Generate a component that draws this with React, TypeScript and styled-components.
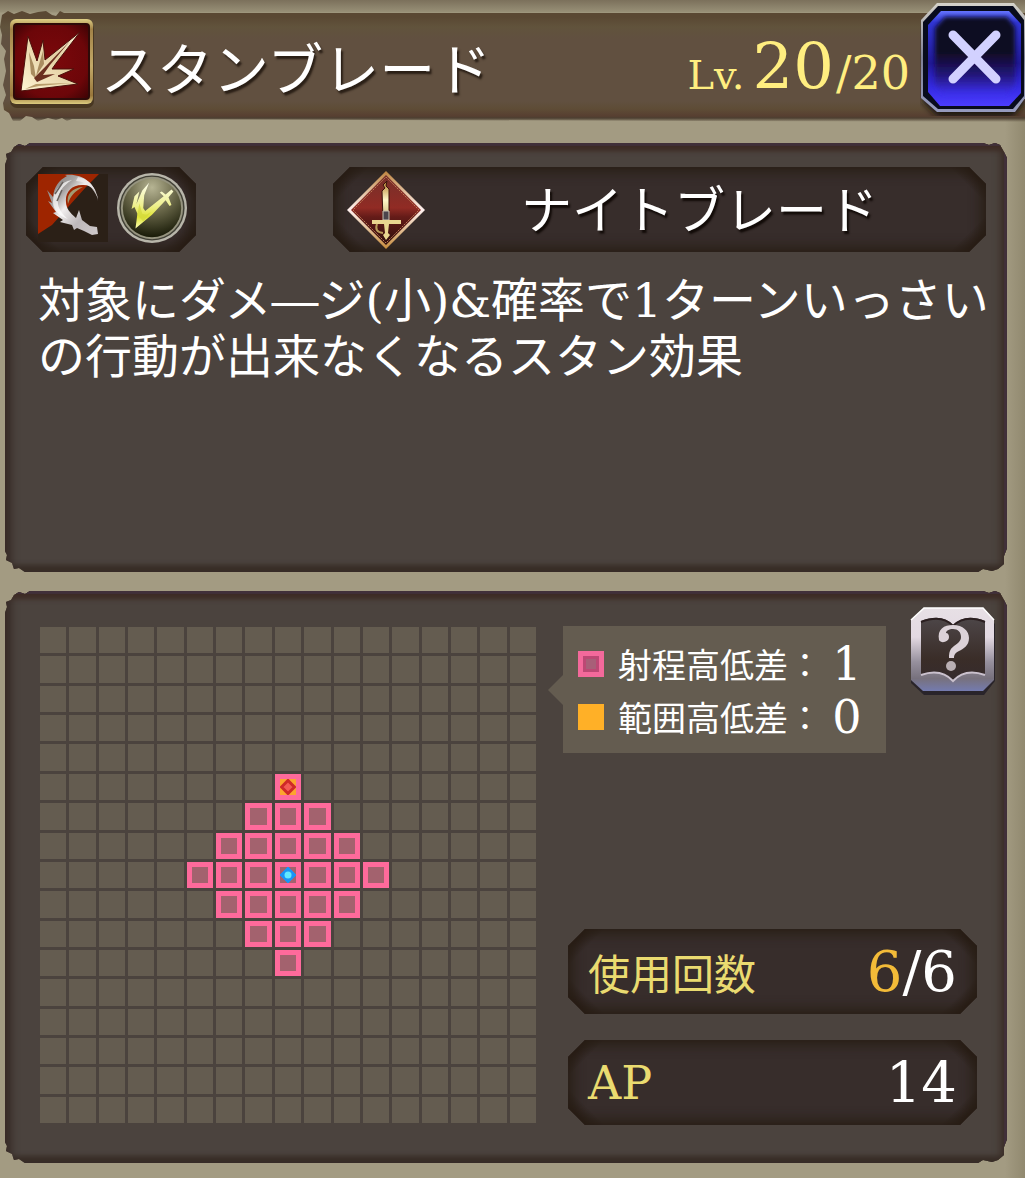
import React from "react";
import styled, { createGlobalStyle, css } from "styled-components";

const sans = `"Noto Sans CJK JP", "Noto Sans", sans-serif`;
const serif = `"DejaVu Serif", "Noto Sans CJK JP", serif`;

const GlobalStyle = createGlobalStyle`
  *, *::before, *::after { box-sizing: border-box; }
  html { min-height: 100%; background: #a39b82; }
  body {
    margin: 0;
    font-family: ${sans};
    color: #fff;
  }
  h1, h2, p, dl, dt, dd { margin: 0; font-weight: 400; }
`;

const Screen = styled.main`
  display: flex;
  flex-direction: column;
  min-height: 100vh;
  padding: 13px 0 15px;
  background:
    linear-gradient(to bottom, #7b705b 0, #989077 12px, transparent 13px),
    linear-gradient(to left, #91896f 0, #a39b82 20px);
`;

const Header = styled.header`
  position: relative;
  isolation: isolate;
  display: flex;
  align-items: center;
  height: 106px;
  padding-left: 9px;
  margin-bottom: 24px;

  &::before {
    content: "";
    position: absolute;
    z-index: -1;
    inset: -2px 0 -3px;
    background: linear-gradient(
      to bottom,
      #5a4833 0,
      #5a4833 6px,
      #61533c 16px,
      #615040 28px,
      #615040 90px,
      #5e4c36 98px,
      #573f31 105px,
      #4c3f31 107px,
      rgba(82, 72, 54, 0) 111px
    );
    clip-path: polygon(
      2px 4px, 8px 0, 14px 3px, 22px 0, 30px 3px, 38px 1px, 46px 0, 52px 4px,
      56px 5px, 60px 0, 64px 2px, 100% 2px, 100% 100%, 72px 108px, 67px 110px,
      62px 107px, 56px 109px, 48px 107px, 38px 110px, 32px 106px, 26px 105px,
      20px 110px, 13px 110px, 9px 102px, 4px 99px, 3px 92px, 6px 84px, 3px 74px,
      6px 60px, 4px 48px, 6px 40px, 1px 33px, 2px 24px, 0 16px
    );
  }
`;

const SkillIcon = styled.svg`
  flex: none;
  align-self: flex-start;
  margin-top: 5px;
  width: 86px;
  height: 90px;
`;

const Title = styled.h1`
  flex: 1;
  padding-left: 6px;
  font-size: 56px;
  line-height: 80px;
  white-space: nowrap;
  text-shadow: 2px 3px 2px #2a1f16;
`;

const Level = styled.p`
  display: flex;
  align-items: baseline;
  padding: 10px 10px 0 0;
  font-family: ${serif};
  font-size: 46px;
  line-height: 80px;
  color: #ffee80;
`;

const LevelLabel = styled.span`
  margin-right: 8px;
  font-size: 40px;
`;

const LevelNow = styled.strong`
  margin-right: 2px;
  font-size: 64px;
  font-weight: 400;
`;

const IconButton = styled.button`
  flex: none;
  padding: 0;
  border: 0;
  background: none;
  cursor: pointer;

  svg { display: block; }
`;

const CloseButton = styled(IconButton)`
  align-self: flex-start;
  margin-top: -11px;
`;

const Panel = styled.section`
  margin: 0 18px 19px 5px;
  background: #4b433e;
  box-shadow:
    inset 0 3px 1px #41303a,
    inset -3px 0 1px #41303a,
    inset 0 9px 5px -1px #3e2c25,
    inset 0 -7px 5px #382d27,
    inset 8px 0 7px -1px #3a2e2a,
    inset -8px 0 7px -1px #3e302a;
  clip-path: polygon(
    0 22px, 2px 16px, 1px 11px, 6px 9px, 9px 4px, 14px 1px, 20px 3px, 25px 0,
    calc(100% - 24px) 0, calc(100% - 18px) 2px, calc(100% - 12px) 0,
    calc(100% - 7px) 2px, calc(100% - 3px) 9px, 100% 15px,
    100% calc(100% - 24px), calc(100% - 3px) calc(100% - 16px),
    calc(100% - 3px) calc(100% - 8px), calc(100% - 9px) calc(100% - 3px),
    calc(100% - 15px) calc(100% - 1px), calc(100% - 24px) calc(100% - 3px),
    calc(100% - 29px) 100%, 20px 100%, 14px calc(100% - 4px),
    9px calc(100% - 3px), 7px calc(100% - 9px), 1px calc(100% - 12px),
    2px calc(100% - 17px), 0 calc(100% - 21px)
  );
`;

const SummaryPanel = styled(Panel)`
  min-height: 429px;
  padding: 24px 12px 24px 21px;
`;

const RangePanel = styled(Panel)`
  display: grid;
  grid-template-columns: minmax(0, 496fr) minmax(0, 432fr);
  gap: 27px;
  margin-bottom: 0;
  padding: 16px 12px 38px 35px;
`;

const plate = css`
  display: flex;
  align-items: center;
  height: 85px;
  background:
    linear-gradient(135deg, #271c14 13px, transparent 26px),
    linear-gradient(225deg, #271c14 13px, transparent 26px),
    linear-gradient(315deg, #271c14 13px, transparent 26px),
    linear-gradient(45deg, #271c14 13px, transparent 26px),
    #372d2b;
  box-shadow: inset 0 0 12px 5px #291e16;
  clip-path: polygon(
    17px 0, calc(100% - 17px) 0, 100% 17px, 100% calc(100% - 17px),
    calc(100% - 17px) 100%, 17px 100%, 0 calc(100% - 17px), 0 17px
  );
`;

const TagRow = styled.div`
  display: flex;
  justify-content: space-between;
  margin-right: 9px;
`;

const TypePlate = styled.div`
  ${plate}
  gap: 8px;
  padding: 0 8px 4px 12px;
`;

const JobPlate = styled.div`
  ${plate}
  flex: 0 1 653px;
  margin-left: 24px;
  padding: 0 13px;
`;

const JobName = styled.h2`
  flex: 1;
  padding-bottom: 6px;
  font-size: 51px;
  line-height: 72px;
  text-align: center;
  white-space: nowrap;
  text-shadow: 2px 3px 2px #120b08;
`;

const Description = styled.p`
  margin: 21px -12px 0 12px;
  font-family: ${serif};
  font-size: 47px;
  line-height: 56px;
`;

const RangeMap = styled.div`
  display: grid;
  grid-template-columns: repeat(17, minmax(0, 1fr));
  gap: 3px;
  margin: 20px 0 2px;
`;

type CellKind = "empty" | "range" | "target" | "self";

const Cell = styled.div<{ $kind: CellKind }>`
  display: grid;
  place-items: center;
  aspect-ratio: 1;
  background: ${(p) =>
    p.$kind === "empty" ? "#645c50" : p.$kind === "target" ? "#fca52e" : "#a3626e"};
  border: ${(p) => (p.$kind === "empty" ? "0" : "5px solid #fe6a9b")};

  svg { display: block; width: 16px; height: 16px; }
`;

const Side = styled.div`
  display: flex;
  flex-direction: column;
  justify-content: space-between;
`;

const SideTop = styled.div`
  display: flex;
  align-items: flex-start;
  justify-content: space-between;
`;

const Legend = styled.dl`
  position: relative;
  margin-top: 19px;
  padding: 11px 14px 10px 15px;
  background: #645c50;

  &::before {
    content: "";
    position: absolute;
    top: 49px;
    left: -15px;
    border: 15px solid transparent;
    border-left: 0;
    border-right-color: #645c50;
  }
`;

const LegendRow = styled.div`
  display: flex;
  align-items: center;
  height: 53px;
`;

const LegendTerm = styled.dt`
  display: flex;
  align-items: center;
  gap: 14px;
  font-size: 34px;
  line-height: 50px;
  white-space: nowrap;
`;

const Swatch = styled.span<{ $kind: "range" | "area" }>`
  width: 26px;
  height: 26px;
  background: ${(p) => (p.$kind === "range" ? "#a85f78" : "#ffb027")};
  border: ${(p) => (p.$kind === "range" ? "5px solid #f3699b" : "0")};
  box-shadow: ${(p) => (p.$kind === "range" ? "inset 0 0 0 3px #bc4874" : "none")};
`;

const LegendValue = styled.dd`
  width: 50px;
  font-family: ${serif};
  font-size: 46px;
  line-height: 52px;
  text-align: center;
`;

const Stats = styled.dl`
  display: grid;
  gap: 26px;
  margin: 0 18px 0 5px;
`;

const Stat = styled.div`
  ${plate}
  justify-content: space-between;
  padding: 0 20px;
`;

const StatName = styled.dt<{ $latin?: boolean }>`
  font-family: ${(p) => (p.$latin ? serif : sans)};
  font-size: ${(p) => (p.$latin ? "46px" : "42px")};
  line-height: 60px;
  color: #eadb70;
`;

const StatValue = styled.dd`
  font-family: ${serif};
  font-size: 56px;
  line-height: 72px;
`;

const Remaining = styled.span`
  color: #f3bb38;
`;

function SlashSkillIcon() {
  return (
    <SkillIcon viewBox="0 0 86 90" aria-hidden="true">
      <defs>
        <linearGradient id="frame" x1="0" y1="0" x2="0" y2="1">
          <stop offset="0" stopColor="#dfcf85" />
          <stop offset=".12" stopColor="#a28247" />
          <stop offset=".55" stopColor="#c3a968" />
          <stop offset=".9" stopColor="#98763b" />
          <stop offset="1" stopColor="#dccb7e" />
        </linearGradient>
        <radialGradient id="red" r=".7">
          <stop offset="0" stopColor="#7c080b" />
          <stop offset=".7" stopColor="#6c0609" />
          <stop offset="1" stopColor="#3f0305" />
        </radialGradient>
        <linearGradient id="ivory" x1="0" y1="1" x2="1" y2="0">
          <stop offset="0" stopColor="#fff4d2" />
          <stop offset=".6" stopColor="#e3cfa2" />
          <stop offset="1" stopColor="#fff7dd" />
        </linearGradient>
      </defs>
      <rect x="1" y="4" width="84" height="86" rx="7" fill="#3f2d17" opacity=".7" />
      <rect x="1" y="1" width="83" height="85" rx="6" fill="url(#frame)" />
      <rect x="4" y="5" width="77" height="77" rx="4" fill="#2e0a08" />
      <rect x="6" y="7" width="73" height="73" rx="2" fill="url(#red)" />
      <path
        d="M12 73 19 18 28 43 34 22 36 42 71 14 48 44 43 51 65 51 49 58 69 66Z"
        fill="url(#ivory)"
        stroke="#4b100b"
        strokeWidth="1"
      />
      <path d="M20 34 25 48 27 61 22 56Z" fill="#a98d60" />
      <path d="M34 33 35 46 27 58 29 50Z" fill="#a98d60" />
      <path d="M25 60 37 48 61 23 41 47 34 57 46 56 28 64Z" fill="#6b3020" />
      <path d="M16 71 27 66 62 65 30 68Z" fill="#b89c6a" />
    </SkillIcon>
  );
}

function CloseIcon() {
  return (
    <svg width="105" height="114" viewBox="0 0 105 114" aria-hidden="true">
      <defs>
        <linearGradient id="blue" x1="0" y1="0" x2="0" y2="1">
          <stop offset="0" stopColor="#6474ff" />
          <stop offset=".12" stopColor="#3035d5" />
          <stop offset=".55" stopColor="#201894" />
          <stop offset=".8" stopColor="#342ae0" />
          <stop offset="1" stopColor="#4b3cff" />
        </linearGradient>
        <linearGradient id="night" x1="0" y1="0" x2="0" y2="1">
          <stop offset="0" stopColor="#100922" />
          <stop offset=".45" stopColor="#100820" />
          <stop offset=".75" stopColor="#221677" />
          <stop offset="1" stopColor="#3d30ee" />
        </linearGradient>
        <linearGradient id="silver" x1="0" y1="0" x2="0" y2="1">
          <stop offset="0" stopColor="#d5d2c9" />
          <stop offset=".5" stopColor="#7f8198" />
          <stop offset="1" stopColor="#969bbd" />
        </linearGradient>
        <filter id="soft" x="-20%" y="-20%" width="140%" height="140%">
          <feGaussianBlur stdDeviation="3" />
        </filter>
        <filter id="glow" x="-20%" y="-20%" width="140%" height="140%">
          <feGaussianBlur stdDeviation="2" />
        </filter>
      </defs>
      <path d="M4 24 18 9h76l11 14v78l-12 14H18L3 100Z" fill="#1c180f" filter="url(#soft)" />
      <path d="m1 18 16-17h77l12 14v80l-11 15H17L1 96Z" fill="url(#silver)" />
      <path d="m3 20 15-16h75l11 14v76l-11 13H18L3 94Z" fill="#080b1c" />
      <path d="m8 23 13-14h68l12 13v69l-12 13H20L8 90Z" fill="url(#blue)" />
      <path d="m15 26 10-11h62l8 10v58l-8 9H24l-9-9Z" fill="url(#night)" filter="url(#glow)" />
      <path d="M33 33 76 77M76 33 33 77" stroke="#d2d1ff" strokeWidth="9" strokeLinecap="round" />
    </svg>
  );
}

function SlashTypeIcon() {
  return (
    <svg width="70" height="68" viewBox="0 0 70 68" aria-hidden="true">
      <defs>
        <linearGradient id="steel" x1="0" y1="0" x2="1" y2="1">
          <stop offset="0" stopColor="#77716f" />
          <stop offset=".3" stopColor="#a9a5a4" />
          <stop offset=".45" stopColor="#f0eded" />
          <stop offset=".7" stopColor="#bdb8ba" />
          <stop offset="1" stopColor="#d0cacc" />
        </linearGradient>
      </defs>
      <path d="M0 0h70v68H0Z" fill="#2b2017" />
      <path d="M0 0h61L48 13 14 51 0 60Z" fill="#9e2500" />
      <path
        d="M60 27 C60 17 53 10 44 11 C33 11 27 19 28 28 C28 34 32 39 38 44 L41 36 44 46 52 52 59 53 60 60 54 61 46 57 39 54 36 56 34 51 22 48 25 46 15 39 18 38 10 27 14 29 9 16 15 23 C16 13 21 6 29 2 L27 1 C42 -1 58 7 60 27Z"
        fill="url(#steel)"
      />
      <path d="M15 28C15 17 22 8 34 6 24 12 19 20 20 30c1 6 5 11 10 15-9-3-15-9-15-17Z" fill="#fff" opacity=".7" />
      <path d="M40 3C50 5 58 13 60 25 55 13 49 8 38 7Z" fill="#ece9e9" opacity=".8" />
      <path d="M30 30C28 20 34 14 45 13 37 17 32 22 30 30Z" fill="#a39a72" />
      <path d="M17 20 25 8M19 27 24 16" stroke="#67615d" strokeWidth="1.5" />
    </svg>
  );
}

function SwordTypeIcon() {
  return (
    <svg width="72" height="74" viewBox="0 0 74 74" aria-hidden="true">
      <defs>
        <radialGradient id="orb" cx=".5" cy=".15" r=".85">
          <stop offset="0" stopColor="#b6b493" />
          <stop offset=".5" stopColor="#686648" />
          <stop offset="1" stopColor="#191b08" />
        </radialGradient>
        <linearGradient id="bolt" x1="0" y1="0" x2="0" y2="1">
          <stop offset="0" stopColor="#fffff0" />
          <stop offset=".5" stopColor="#eef08e" />
          <stop offset=".75" stopColor="#dfe436" />
          <stop offset="1" stopColor="#fcffb4" />
        </linearGradient>
      </defs>
      <circle cx="37" cy="37" r="36" fill="#b8b6aa" />
      <circle cx="37" cy="37" r="33.5" fill="#414036" />
      <circle cx="37" cy="37" r="32" fill="#96947f" />
      <circle cx="37" cy="37" r="30" fill="url(#orb)" />
      <path
        d="M20 58 22 43 19 36 16 38 19 25 24 20 21 33 27 19 34 11 29 24 28 37 30 40 49 25 45 21 47 20 51 23 57 18 59 20 54 26 57 34 55 35 51 29 37 44Z"
        fill="url(#bolt)"
      />
      <path d="M22 44 24 32 27 43 31 44 36 41 28 51Z" fill="#d3d83a" opacity=".7" />
    </svg>
  );
}

function JobEmblem() {
  return (
    <svg width="80" height="80" viewBox="0 0 80 80" aria-hidden="true">
      <defs>
        <linearGradient id="ruby" x1="0" y1="0" x2="0" y2="1">
          <stop offset="0" stopColor="#75302a" />
          <stop offset=".47" stopColor="#912b24" />
          <stop offset=".6" stopColor="#641b18" />
          <stop offset="1" stopColor="#2d0e0b" />
        </linearGradient>
        <linearGradient id="gold" x1="0" y1="0" x2="0" y2="1">
          <stop offset="0" stopColor="#bf8540" />
          <stop offset=".5" stopColor="#fff1ef" />
          <stop offset="1" stopColor="#c58b3b" />
        </linearGradient>
        <linearGradient id="blade" x1="0" y1="0" x2="0" y2="1">
          <stop offset="0" stopColor="#b07a25" />
          <stop offset=".5" stopColor="#fff7c9" />
          <stop offset="1" stopColor="#c8b06d" />
        </linearGradient>
      </defs>
      <path d="M40 1 79 40 40 79 1 40Z" fill="url(#gold)" />
      <path d="M40 5 75 40 40 75 5 40Z" fill="url(#ruby)" />
      <path d="M40 7 73 40 40 73 7 40Z" fill="none" stroke="#bd7a55" strokeWidth="1" strokeDasharray="2 1" />
      <path d="m37 49-1-28 3-3-2-3 4-4-1 5 3 3v30Z" fill="url(#blade)" stroke="#3b120d" strokeWidth="1" />
      <path d="M37 41h6v9h-6Z" fill="#4b454c" stroke="#cfc4b3" strokeWidth="1" />
      <path d="M26 50h29v4H43l-1 9 2 2-4 5-3-5 2-2-1-9H26Z" fill="#e9d58f" />
      <path d="M31 54q-3 8 6 9" fill="none" stroke="#b89a59" strokeWidth="2" />
    </svg>
  );
}

function HelpIcon() {
  return (
    <svg width="85" height="89" viewBox="0 0 85 89" aria-hidden="true">
      <defs>
        <linearGradient id="pearl" x1="0" y1="0" x2="0" y2="1">
          <stop offset="0" stopColor="#e7e0e5" />
          <stop offset=".35" stopColor="#e3d9e2" />
          <stop offset=".65" stopColor="#96909d" />
          <stop offset=".85" stopColor="#77717d" />
          <stop offset="1" stopColor="#747baf" />
        </linearGradient>
        <linearGradient id="page" x1="0" y1="0" x2="0" y2="1">
          <stop offset="0" stopColor="#4d4648" />
          <stop offset=".65" stopColor="#3a2d28" />
          <stop offset="1" stopColor="#352b2d" />
        </linearGradient>
      </defs>
      <path d="m1 16 14-11h57l13 12v57L74 88H14L1 76Z" fill="#29242a" />
      <path d="M1 13 14 1h59l11 12v60L73 84H13L1 73Z" fill="url(#pearl)" />
      <path d="m1 13 13-12h59l11 12" fill="none" stroke="#fff" strokeWidth="1.5" />
      <path d="M11 14q21-8 32 4 12-12 32-4v54q-21-7-32 6-12-13-32-6Z" fill="url(#page)" />
      <path d="M11 15q21-8 32 4 12-12 32-4" fill="none" stroke="#2b1f20" strokeWidth="2" />
      <path d="M11 68q20-7 32 6 12-13 32-6" fill="none" stroke="#cac1cd" strokeWidth="2" />
      <path
        d="M29 33C27 22 34 18 43 18c10 0 16 6 16 13 0 8-6 11-10 13-4 2-5 4-5 7h-5c0-6 1-9 5-12 4-3 7-5 7-9 0-5-3-8-8-8-4 0-7 2-7 4 2 0 3 2 3 4 0 5-8 7-10 3Z"
        fill="#dcd2d8"
      />
      <circle cx="41" cy="59" r="5" fill="#b9afb3" />
    </svg>
  );
}

const SIZE = 17;
const CENTER = 8;
const REACH = 3;

function cellKind(row: number, col: number): CellKind {
  const distance = Math.abs(row - CENTER) + Math.abs(col - CENTER);
  if (distance === 0) return "self";
  if (row === CENTER - REACH && col === CENTER) return "target";
  return distance <= REACH ? "range" : "empty";
}

const cells = Array.from({ length: SIZE * SIZE }, (_, i) =>
  cellKind(Math.floor(i / SIZE), i % SIZE)
);

function CellMark({ kind }: { kind: CellKind }) {
  if (kind === "target")
    return (
      <svg viewBox="0 0 16 16" aria-hidden="true">
        <path d="M8 1.5 14.5 8 8 14.5 1.5 8Z" fill="#f45b54" stroke="#cf2928" strokeWidth="3" />
      </svg>
    );
  if (kind === "self")
    return (
      <svg viewBox="0 0 16 16" aria-hidden="true">
        <path d="M8 0 12 4 16 8 12 12 8 16 4 12 0 8 4 4Z" fill="#1c94f5" stroke="#1c94f5" />
        <circle cx="8" cy="8" r="3.5" fill="#62eaff" />
      </svg>
    );
  return null;
}

export default function App() {
  return (
    <>
      <GlobalStyle />
      <Screen>
        <Header>
          <SlashSkillIcon />
          <Title>スタンブレード</Title>
          <Level>
            <LevelLabel>Lv.</LevelLabel>
            <LevelNow>20</LevelNow>
            <span>/20</span>
          </Level>
          <CloseButton type="button" aria-label="閉じる">
            <CloseIcon />
          </CloseButton>
        </Header>

        <SummaryPanel>
          <TagRow>
            <TypePlate>
              <SlashTypeIcon />
              <SwordTypeIcon />
            </TypePlate>
            <JobPlate>
              <JobEmblem />
              <JobName>ナイトブレード</JobName>
            </JobPlate>
          </TagRow>
          <Description>
            対象にダメ―ジ(小)&amp;確率で1ターンいっさいの行動が出来なくなるスタン効果
          </Description>
        </SummaryPanel>

        <RangePanel>
          <RangeMap>
            {cells.map((kind, i) => (
              <Cell key={i} $kind={kind}>
                <CellMark kind={kind} />
              </Cell>
            ))}
          </RangeMap>
          <Side>
            <SideTop>
              <Legend>
                <LegendRow>
                  <LegendTerm>
                    <Swatch $kind="range" />
                    射程高低差：
                  </LegendTerm>
                  <LegendValue>1</LegendValue>
                </LegendRow>
                <LegendRow>
                  <LegendTerm>
                    <Swatch $kind="area" />
                    範囲高低差：
                  </LegendTerm>
                  <LegendValue>0</LegendValue>
                </LegendRow>
              </Legend>
              <IconButton type="button" aria-label="ヘルプ">
                <HelpIcon />
              </IconButton>
            </SideTop>
            <Stats>
              <Stat>
                <StatName>使用回数</StatName>
                <StatValue>
                  <Remaining>6</Remaining>/6
                </StatValue>
              </Stat>
              <Stat>
                <StatName $latin>AP</StatName>
                <StatValue>14</StatValue>
              </Stat>
            </Stats>
          </Side>
        </RangePanel>
      </Screen>
    </>
  );
}
